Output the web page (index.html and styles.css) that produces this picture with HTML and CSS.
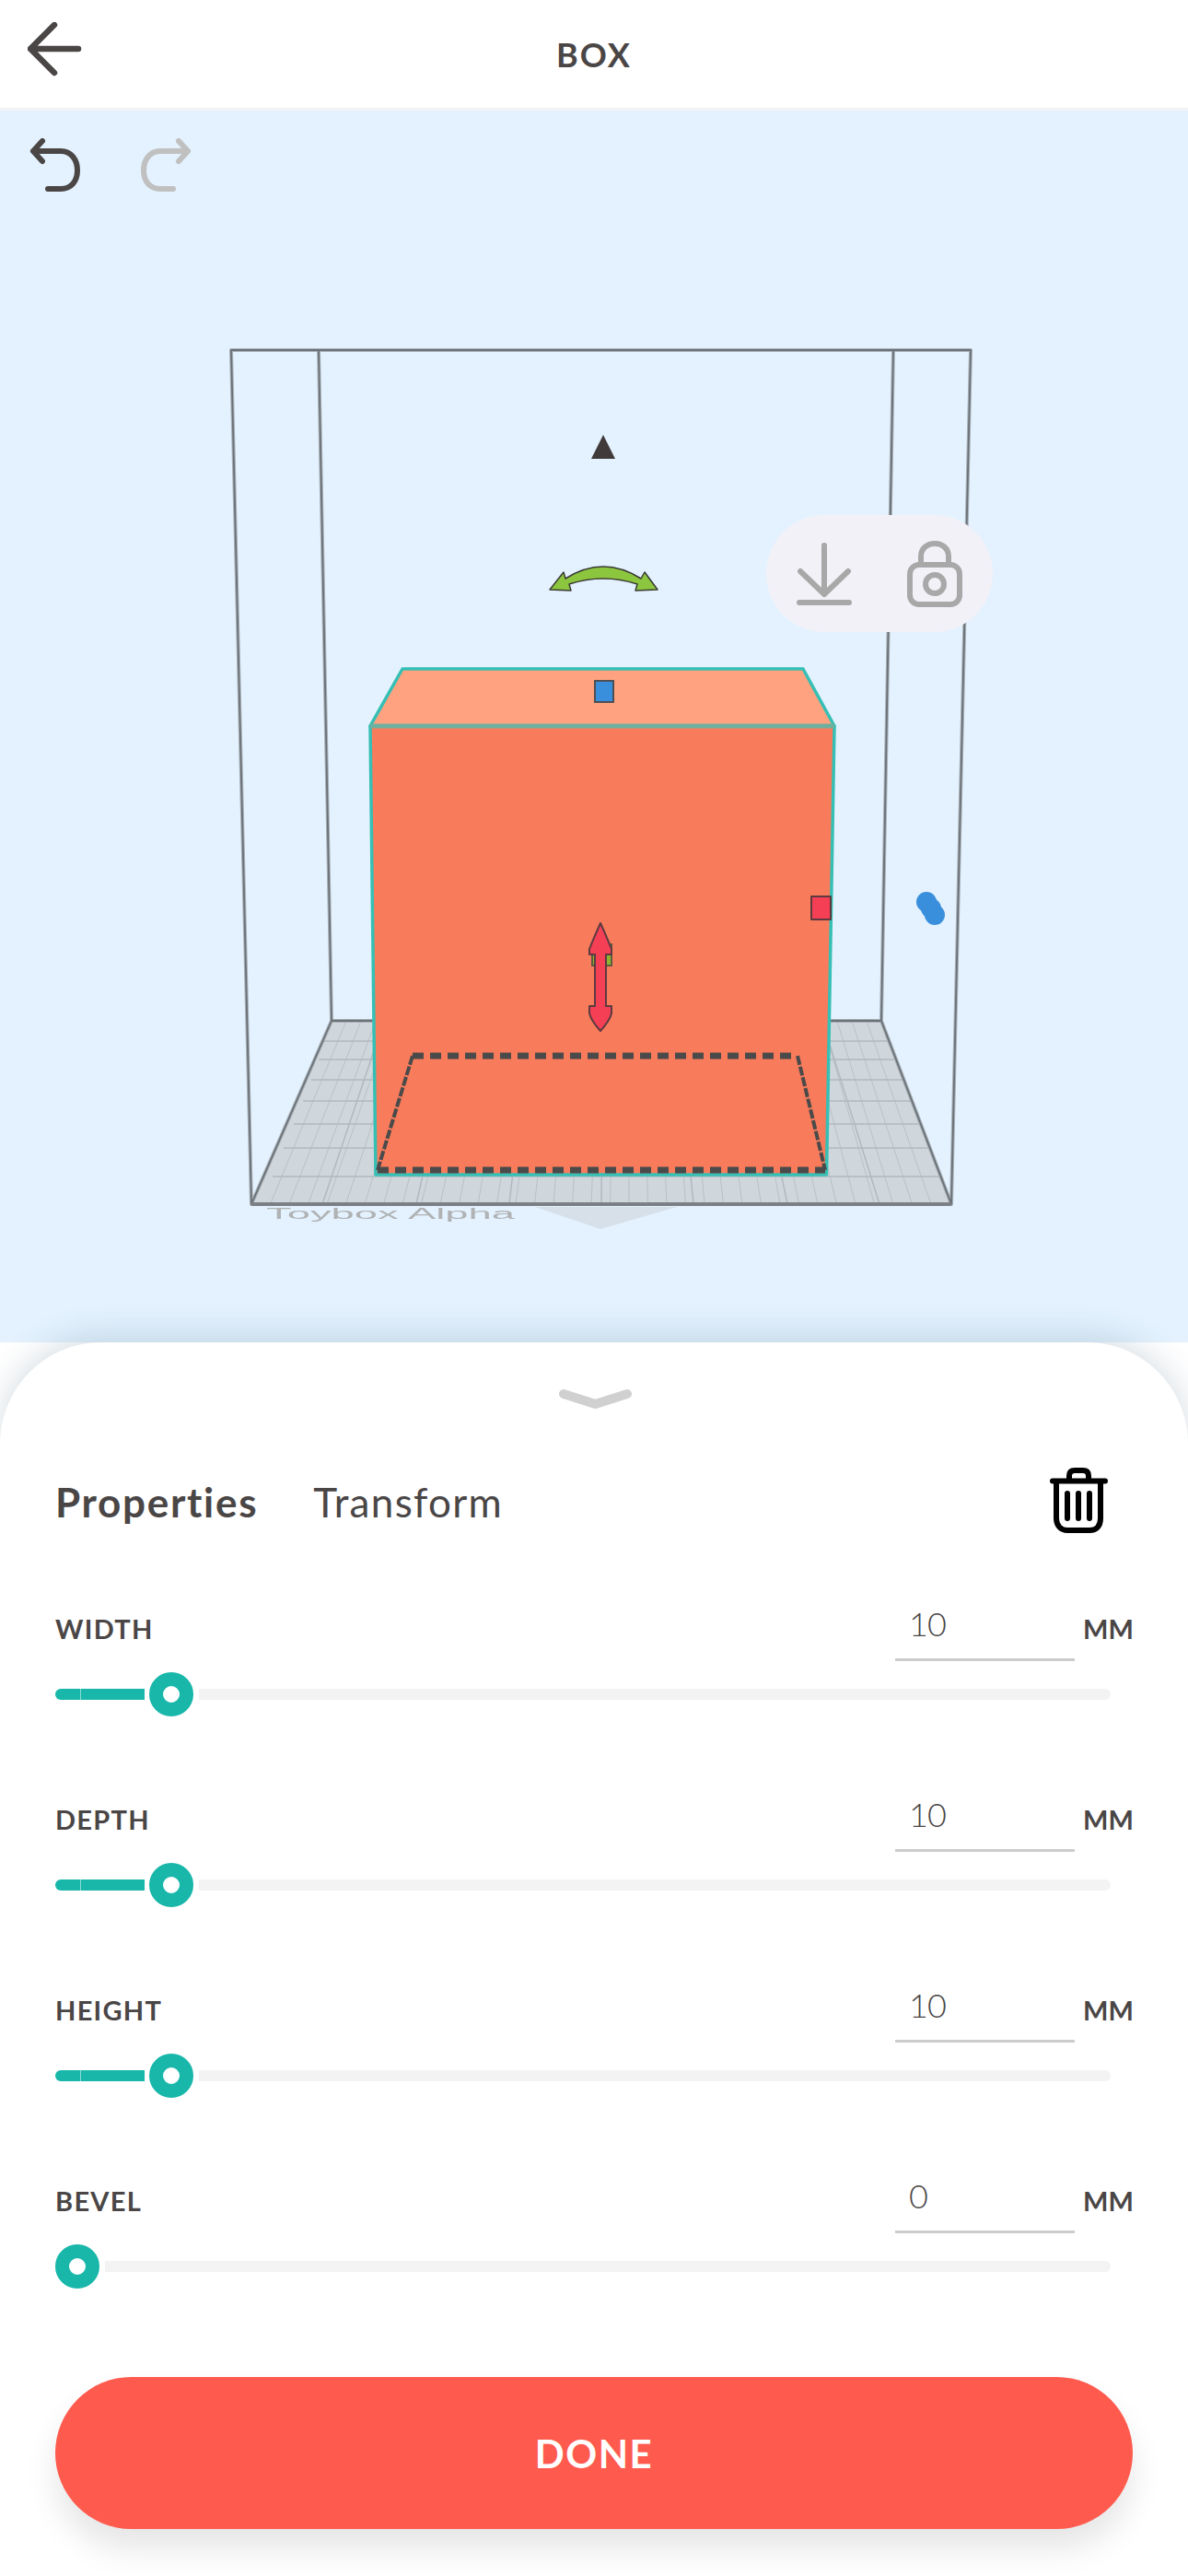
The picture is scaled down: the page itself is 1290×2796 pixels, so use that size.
FILE: index.html
```html
<!DOCTYPE html>
<html lang="en">
<head>
<meta charset="utf-8">
<title>Box</title>
<link rel="stylesheet" href="styles.css">
</head>
<body>
<div class="app">
  <header class="topbar">
    <svg class="back-icon" viewBox="0 0 60 60"><path d="M29 3 3 29l26 26M3 29h52"/></svg>
    <h1 class="title">BOX</h1>
    <span></span>
  </header>
  <main class="stage">
    <svg class="scene" viewBox="0 120 1290 1337">
      <g class="floor">
        <polygon class="floor-fill" points="360,1108 957,1108 1033,1307 273,1307"/>
        <path class="floor-minor" d="M293.5 1307 376 1108M314 1307 392 1108M334.5 1307 408 1108M355 1307 425 1108M375.5 1307 441 1108M396 1307 457 1108M416.5 1307 473 1108M437 1307 489 1108M457.5 1307 505 1108M478 1307 521 1108M498.5 1307 538 1108M519 1307 554 1108M539.5 1307 570 1108M560 1307 586 1108M580.5 1307 602 1108M601 1307 618 1108M621.5 1307 634 1108M642 1307 651 1108M662.5 1307 667 1108M683 1307 683 1108M703.5 1307 699 1108M724 1307 715 1108M744.5 1307 731 1108M765 1307 747 1108M785.5 1307 764 1108M806 1307 780 1108M826.5 1307 796 1108M847 1307 812 1108M867.5 1307 828 1108M888 1307 844 1108M908.5 1307 860 1108M929 1307 876 1108M949.5 1307 893 1108M970 1307 909 1108M990.5 1307 925 1108M1011 1307 941 1108"/>
        <path class="floor-major" d="M350 1307 417 1108M452 1307 497 1108M553 1307 576 1108M653 1307 655 1108M753 1307 734 1108M855 1307 814 1108M955 1307 893 1108M352 1130H964M346 1150H972M338 1172H980M329 1195H989M319 1220H999M308 1246H1010M296 1277H1022"/>
        <polygon class="floor-pointer" points="581,1310 735,1310 652,1334"/>
      </g>
      <path class="frame-halo" d="M346 380 360 1108H957L970 380M251 380H1054L1033 1307H273ZM273 1307 360 1108M1033 1307 957 1108"/>
      <path class="frame" d="M346 380 360 1108H957L970 380M251 380H1054L1033 1307H273ZM273 1307 360 1108M1033 1307 957 1108"/>
      <path class="frame-front" d="M273 1307H1033"/>
      <text class="floor-label" x="289" y="1323" textLength="270" lengthAdjust="spacingAndGlyphs">Toybox Alpha</text>
      <polygon class="box-top" points="437,726 872,726 906,788 402,788"/>
      <polygon class="box-front" points="402,788 906,788 897.500,1275 408,1275"/>
      <path class="box-ridge" d="M402 788H906"/>
      <path class="dash-h" d="M448 1146H866M410 1270H896"/>
      <path class="dash-v" d="M448 1146 410 1270M866 1146 896 1270"/>
      <polygon class="handle-dark" points="655,472 668,498 642,498"/>
      <path class="handle-green" d="M597 640 612 621 614 628Q655 602 696 628L700 621 714 640 690 641 692 634Q655 622 618 634L620 641Z"/>
      <rect class="handle-blue" x="646" y="739" width="20" height="23"/>
      <rect class="handle-red" x="881" y="973" width="21" height="25"/>
      <circle class="handle-blob" cx="1006" cy="979" r="11"/>
      <circle class="handle-blob" cx="1011" cy="986" r="11"/>
      <circle class="handle-blob" cx="1015" cy="993" r="11"/>
      <rect class="handle-green-square" x="643" y="1025" width="21" height="23"/>
      <path class="handle-red" d="M652 1002Q658 1015 664 1030V1036H658V1092H664V1100Q662 1108 652 1119 642 1108 640 1100V1092H646V1036H640V1030Q646 1015 652 1002Z"/>
    </svg>
    <div class="history">
      <svg class="history-icon" viewBox="0 0 60 60"><path d="M6 14 16 3M6 14l10 11M6 14H36C47 14 54 23 54 35S47 55 36 55H22"/></svg>
      <svg class="history-icon is-disabled" viewBox="0 0 60 60"><path transform="translate(60 0) scale(-1 1)" d="M6 14 16 3M6 14l10 11M6 14H36C47 14 54 23 54 35S47 55 36 55H22"/></svg>
    </div>
    <div class="pill">
      <svg class="pill-icon" viewBox="0 0 60 68"><path d="M30 3V56M4 31 30 56 56 31M3 65H57"/></svg>
      <svg class="pill-icon lock" viewBox="0 0 60 72"><rect x="3" y="26" width="54" height="43" rx="10"/><path d="M15 26V17C15 8 22 3 30 3S45 8 45 17V26"/><circle cx="30" cy="47" r="10"/></svg>
    </div>
  </main>
  <section class="sheet">
    <svg class="grabber" viewBox="0 0 79 21"><path d="M5 5 39.500 16 74 5"/></svg>
    <div class="tabs">
      <span class="tab is-active">Properties</span>
      <span class="tab">Transform</span>
      <svg class="trash" viewBox="0 0 63 71"><path d="M21 14V9C21 5 23 3 27 3H36C40 3 42 5 42 9V14M3 14.500H60"/><path d="M7 15V55C7 63 12 68 19 68H43C51 68 55 63 55 55V15"/><path d="M19 28V55M31 28V55M43 28V55"/></svg>
    </div>
    <div class="rows">
      <div class="row">
        <div class="row-head"><span class="label">WIDTH</span><div class="value">10</div><span class="unit">MM</span></div>
        <div class="slider"><span class="fill"></span><span class="thumb"></span><span class="track"></span></div>
      </div>
      <div class="row">
        <div class="row-head"><span class="label">DEPTH</span><div class="value">10</div><span class="unit">MM</span></div>
        <div class="slider"><span class="fill"></span><span class="thumb"></span><span class="track"></span></div>
      </div>
      <div class="row">
        <div class="row-head"><span class="label">HEIGHT</span><div class="value">10</div><span class="unit">MM</span></div>
        <div class="slider"><span class="fill"></span><span class="thumb"></span><span class="track"></span></div>
      </div>
      <div class="row">
        <div class="row-head"><span class="label">BEVEL</span><div class="value">0</div><span class="unit">MM</span></div>
        <div class="slider"><span class="thumb"></span><span class="track"></span></div>
      </div>
    </div>
    <button class="done" type="button">DONE</button>
  </section>
</div>
</body>
</html>
```
FILE: styles.css
```css
* { box-sizing: border-box; }
html, body { margin: 0; padding: 0; background: #fff; }
body { font-family: "Lato", "Open Sans", sans-serif; color: #4a4646; }
.app { width: 1290px; height: 2796px; display: flex; flex-direction: column; overflow: hidden; }

.topbar {
  height: 120px; flex: none; background: #fff; border-bottom: 3px solid #f1f3f4;
  display: grid; grid-template-columns: 1fr auto 1fr; align-items: start;
}
.back-icon { width: 60px; height: 60px; margin: 24px 0 0 30px; fill: none; stroke: #4a4646; stroke-width: 6.500; stroke-linecap: round; stroke-linejoin: round; }
.title { margin: 39px 0 0; font-size: 36px; line-height: 40px; font-weight: 700; letter-spacing: 2px; }

.stage { position: relative; height: 1337px; flex: none; background: #e3f2fe; }
.scene { position: absolute; inset: 0; width: 1290px; height: 1337px; filter: blur(0.7px); }
.floor-fill { fill: #d0d7dc; }
.floor-minor { fill: none; stroke: #b8c0c6; stroke-width: 1; }
.floor-major { fill: none; stroke: #b0b9c0; stroke-width: 1.500; }
.floor-pointer { fill: #d7e0e8; }
.frame-halo { fill: none; stroke: #a8b0b7; stroke-width: 4; stroke-linejoin: round; }
.frame { fill: none; stroke: #6a7177; stroke-width: 1.800; stroke-linejoin: round; }
.frame-front { fill: none; stroke: #7a8086; stroke-width: 4; }
.floor-label { font-family: "Liberation Sans", sans-serif; font-size: 16px; fill: #b0b2b4; }
.box-top { fill: #ffa27f; stroke: #36bfb4; stroke-width: 3.500; stroke-linejoin: round; }
.box-front { fill: #f87c5b; stroke: #36bfb4; stroke-width: 3.500; stroke-linejoin: round; }
.box-ridge { stroke: #6db09f; stroke-width: 5; }
.dash-h { fill: none; stroke: #4a4a4a; stroke-width: 7; stroke-dasharray: 12 7; }
.dash-v { fill: none; stroke: #4a4a4a; stroke-width: 4; stroke-dasharray: 10 2; }
.handle-dark { fill: #403a3a; }
.handle-green { fill: #8cc63f; stroke: #3a3a34; stroke-width: 1.500; stroke-linejoin: round; }
.handle-blue { fill: #3a8fdc; stroke: #4d4f55; stroke-width: 2; }
.handle-red { fill: #f43f55; stroke: #5d3a40; stroke-width: 2; stroke-linejoin: round; }
.handle-blob { fill: #3a8fdc; }
.handle-green-square { fill: #8fb530; stroke: #5d5a40; stroke-width: 2; }

.history { position: absolute; left: 30px; top: 30px; display: flex; gap: 60px; }
.history-icon { width: 60px; height: 60px; fill: none; stroke: #4a4646; stroke-width: 6; stroke-linecap: round; stroke-linejoin: round; }
.history-icon.is-disabled { stroke: #c0c0c0; }

.pill {
  position: absolute; left: 832px; top: 439px; width: 246px; height: 127px; border-radius: 64px;
  background: #f3f1f8; display: flex; align-items: center; gap: 60px; padding-left: 33px;
}
.pill-icon { width: 60px; height: 68px; flex: none; fill: none; stroke: #a8a8a8; stroke-width: 6; stroke-linecap: round; stroke-linejoin: round; }
.pill-icon.lock { height: 72px; }

.sheet {
  position: relative; flex: none; height: 1339px; padding: 51px 60px 0; background: #fff;
  border-radius: 110px 110px 0 0; box-shadow: 0 -6px 36px rgba(40, 70, 100, .18);
  display: flex; flex-direction: column;
}
.grabber { width: 79px; height: 21px; align-self: center; margin-left: 2px; fill: none; stroke: #d0d0d0; stroke-width: 10; stroke-linecap: round; stroke-linejoin: round; flex: none; }
.tabs { display: flex; align-items: center; height: 71px; margin-top: 64px; flex: none; gap: 60px; }
.tab { font-size: 44px; line-height: 50px; font-weight: 400; margin-top: 2px; letter-spacing: 1.300px; }
.tab.is-active { font-weight: 700; letter-spacing: 1.700px; }
.trash { width: 63px; height: 71px; margin-left: auto; margin-right: 27px; flex: none; fill: none; stroke: #000; stroke-width: 6; stroke-linecap: round; stroke-linejoin: round; }

.rows { display: flex; flex-direction: column; gap: 84px; margin-top: 76px; flex: none; }
.row { display: flex; flex-direction: column; gap: 12px; }
.row-head { height: 63px; display: flex; align-items: flex-start; }
.label { font-size: 29px; line-height: 34px; font-weight: 700; padding-top: 11px; letter-spacing: 1.300px; width: 912px; flex: none; }
.value { width: 195px; height: 63px; flex: none; border-bottom: 3px solid #ccc; padding: 0 0 0 15px; font-size: 36px; line-height: 44px; font-weight: 300; letter-spacing: -1px; }
.unit { font-size: 29px; line-height: 34px; font-weight: 700; padding-top: 11px; margin-left: 9px; }

.slider { width: 1146px; height: 48px; display: flex; align-items: center; }
.fill { width: 97px; height: 12px; flex: none; margin-right: 5px; border-radius: 6px 0 0 6px; background: linear-gradient(90deg, #18b7aa 27px, #8adcd4 27px, #8adcd4 28px, #18b7aa 28px); }
.thumb { width: 48px; height: 48px; flex: none; margin-right: 6px; border-radius: 50%; border: 15px solid #18b7aa; background: #fff; }
.track { flex: 1; height: 12px; background: #f3f3f3; border-radius: 0 6px 6px 0; }

.done {
  width: 1170px; height: 165px; margin-top: 96px; flex: none; border: 0; border-radius: 83px; background: #ff5a4e;
  box-shadow: 0 22px 34px rgba(0, 0, 0, .1); color: #fff; font-family: inherit; font-size: 42px; font-weight: 700; letter-spacing: 1.500px;
}
```
